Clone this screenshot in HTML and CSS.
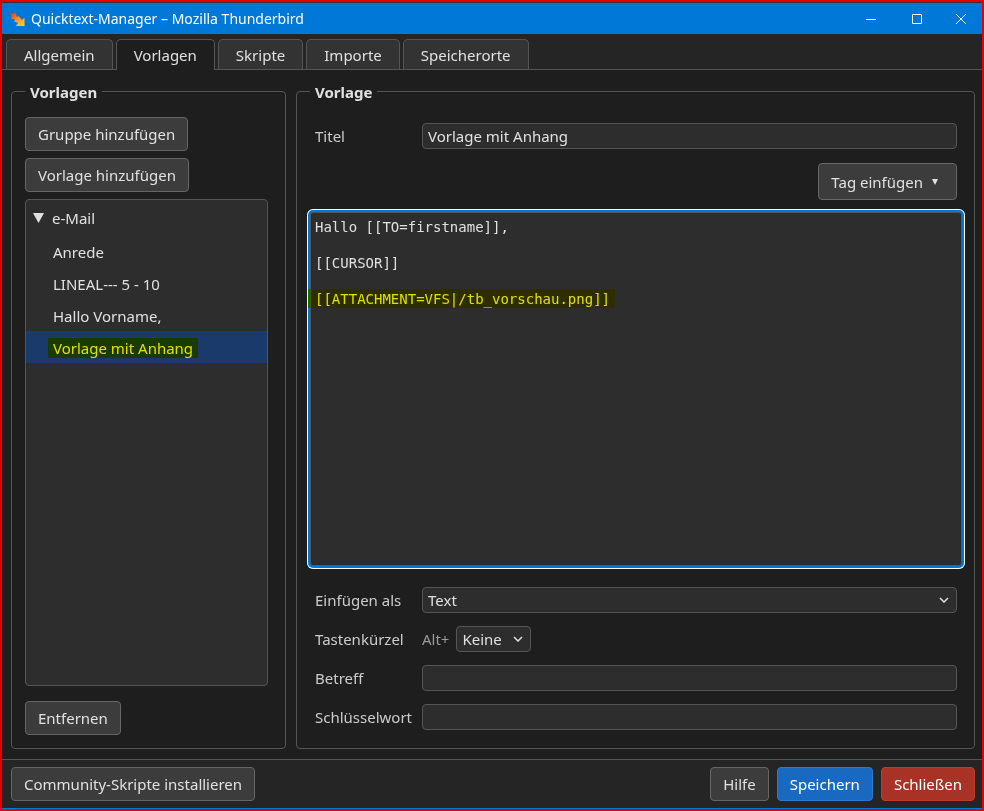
FILE: index.html
```html
<!DOCTYPE html>
<html lang="de">
<head>
  <meta charset="UTF-8">
  <title>Quicktext-Manager – Mozilla Thunderbird</title>
  <link rel="stylesheet" href="styles.css">
</head>
<body>
  <header class="titlebar">
    <svg class="app-icon" width="16" height="16" viewBox="0 0 16 16">
      <defs>
        <linearGradient id="bolt" x1="0" y1="0" x2="1" y2="1">
          <stop offset="0" stop-color="#d8231f"/>
          <stop offset=".5" stop-color="#f58a2a"/>
          <stop offset="1" stop-color="#ffd23c"/>
        </linearGradient>
      </defs>
      <path d="M0 0 L3.500 3 L6 1.500 L8 6 L9.500 5 L13 9 L15.500 6.500 V15 H6.500 L9 12 L5 10.500 L6 8.500 L2 7.500 L2.500 5 Z" fill="url(#bolt)"/>
    </svg>
    <h1 class="window-title">Quicktext-Manager – Mozilla Thunderbird</h1>
    <div class="window-controls">
      <button class="window-button" aria-label="Minimieren">
        <svg width="10" height="10" viewBox="0 0 10 10"><path d="M0 5.500H10"/></svg>
      </button>
      <button class="window-button" aria-label="Maximieren">
        <svg width="10" height="10" viewBox="0 0 10 10"><path d="M.5 .5H9.500V9.500H.5Z"/></svg>
      </button>
      <button class="window-button" aria-label="Fenster schließen">
        <svg width="10" height="10" viewBox="0 0 10 10"><path d="M0 0L10 10M10 0L0 10"/></svg>
      </button>
    </div>
  </header>

  <nav class="tabs" role="tablist">
    <button class="tab" role="tab">Allgemein</button>
    <button class="tab active" role="tab" aria-selected="true">Vorlagen</button>
    <button class="tab" role="tab">Skripte</button>
    <button class="tab" role="tab">Importe</button>
    <button class="tab" role="tab">Speicherorte</button>
  </nav>

  <main class="content">
    <fieldset class="panel template-list">
      <legend>Vorlagen</legend>
      <button class="button">Gruppe hinzufügen</button>
      <button class="button">Vorlage hinzufügen</button>
      <ul class="tree" role="tree">
        <li class="tree-group" role="treeitem" aria-expanded="true">
          <svg width="11" height="10" viewBox="0 0 11 10"><path d="M0 0H11L5.500 10Z"/></svg>
          e-Mail
        </li>
        <li class="tree-item" role="treeitem">Anrede</li>
        <li class="tree-item" role="treeitem">LINEAL--- 5 - 10</li>
        <li class="tree-item" role="treeitem">Hallo Vorname,</li>
        <li class="tree-item selected" role="treeitem" aria-selected="true"><span class="marked">Vorlage mit Anhang</span></li>
      </ul>
      <button class="button">Entfernen</button>
    </fieldset>

    <fieldset class="panel template">
      <legend>Vorlage</legend>
      <div class="form-row">
        <label for="title">Titel</label>
        <input id="title" class="field" type="text" value="Vorlage mit Anhang">
      </div>
      <div class="toolbar">
        <button class="button tag-button">Tag einfügen <svg width="6" height="6" viewBox="0 0 6 6"><path d="M0 0H6L3 6Z"/></svg></button>
      </div>
      <div class="editor">
        <textarea class="editor-text" aria-label="Vorlagentext" spellcheck="false">Hallo [[TO=firstname]],

[[CURSOR]]

[[ATTACHMENT=VFS|/tb_vorschau.png]]</textarea>
        <div class="editor-mark"></div>
      </div>
      <div class="form-rows">
        <div class="form-row">
          <label for="insert-as">Einfügen als</label>
          <select id="insert-as" class="field">
            <option>Text</option>
            <option>HTML</option>
          </select>
        </div>
        <div class="form-row">
          <label for="shortcut">Tastenkürzel</label>
          <div class="shortcut">
            <span class="modifier">Alt+</span>
            <select id="shortcut" class="field">
              <option>Keine</option>
            </select>
          </div>
        </div>
        <div class="form-row">
          <label for="subject">Betreff</label>
          <input id="subject" class="field" type="text">
        </div>
        <div class="form-row">
          <label for="keyword">Schlüsselwort</label>
          <input id="keyword" class="field" type="text">
        </div>
      </div>
    </fieldset>
  </main>

  <footer class="footer">
    <button class="button">Community-Skripte installieren</button>
    <div class="footer-actions">
      <button class="button">Hilfe</button>
      <button class="button save">Speichern</button>
      <button class="button close">Schließen</button>
    </div>
  </footer>
</body>
</html>
```
FILE: styles.css
```css
* {
  box-sizing: border-box;
}

body {
  display: flex;
  flex-direction: column;
  min-height: 100vh;
  margin: 0;
  border: 2px solid #e60000;
  background: #1e1e1e;
  color: #e0e0e0;
  font-family: "Segoe UI", "Noto Sans", sans-serif;
  font-size: 15px;
  line-height: 20px;
}

button,
input,
select {
  color: inherit;
  font-family: inherit;
  font-size: 15px;
  line-height: 20px;
}

/* Title bar */
.titlebar {
  display: flex;
  align-items: center;
  height: 32px;
  padding-left: 7px;
  border-top: 1px solid #333;
  background: #0078d7;
  color: #fff;
}

.window-title {
  flex: 1;
  margin: 0 0 0 6px;
  font-size: 14px;
  font-weight: 400;
}

.window-controls {
  display: flex;
}

.window-button {
  display: flex;
  align-items: center;
  justify-content: center;
  width: 46px;
  height: 31px;
  padding: 0;
  border: 0;
  background: none;
}

.window-button:last-child {
  width: 42px;
}

.window-button svg {
  fill: none;
  stroke: #fff;
}

/* Tabs */
.tabs {
  display: flex;
  gap: 3px;
  padding: 5px 4px 0;
  border-bottom: 1px solid #555;
  background: #252525;
}

.tab {
  height: 30px;
  padding: 0 17px;
  border: 1px solid #555;
  border-bottom: 0;
  border-radius: 5px 5px 0 0;
  background: #333;
}

.tab.active {
  height: 31px;
  margin-bottom: -1px;
  background: #1e1e1e;
}

/* Panels */
.content {
  display: grid;
  flex: 1;
  grid-template-columns: 275px 1fr;
  gap: 10px;
  padding: 11px 7px 10px 9px;
}

.panel {
  display: flex;
  flex-direction: column;
  min-width: 0;
  margin: 0;
  border: 1px solid #555;
  border-radius: 4px;
}

.panel legend {
  padding: 2px 5px 0;
  font-weight: 700;
  line-height: 18px;
}

.template-list {
  align-items: flex-start;
  gap: 7px;
  padding: 16px 17px 13px 13px;
}

.template {
  padding: 22px 12px 18px 13px;
}

.button {
  height: 34px;
  padding: 0 12px;
  border: 1px solid #666;
  border-radius: 4px;
  background: #3c3c3c;
}

/* Template tree */
.tree {
  flex: 1;
  align-self: stretch;
  margin: 0 0 8px;
  padding: 3px 0;
  border: 1px solid #555;
  border-radius: 4px;
  background: #2d2d2d;
  list-style: none;
}

.tree-group {
  display: flex;
  align-items: center;
  gap: 8px;
  height: 32px;
  padding: 0 7px 2px;
}

.tree-group svg {
  fill: #e0e0e0;
}

.tree-item {
  height: 32px;
  padding: 7px 27px 5px;
}

.tree-item.selected {
  background: #1a3a6b;
}

.marked {
  display: inline-block;
  margin-left: -5px;
  padding: 0 5px;
  background: #1a3a00;
  color: #e0e000;
}

/* Template form */
.form-row {
  display: grid;
  grid-template-columns: 107px 1fr;
  align-items: center;
  padding: 0 5px;
}

.form-row label {
  color: #ccc;
}

.form-rows {
  display: grid;
  gap: 13px;
}

.field {
  width: 100%;
  height: 26px;
  padding: 0 5px;
  border: 1px solid #555;
  border-radius: 4px;
  background: #2d2d2d;
}

select.field {
  padding-right: 28px;
  appearance: none;
  background: #2d2d2d url("data:image/svg+xml,%3Csvg xmlns='http://www.w3.org/2000/svg' width='10' height='6'%3E%3Cpath d='M1 1l4 4 4-4' fill='none' stroke='%23e0e0e0' stroke-width='1.5'/%3E%3C/svg%3E") no-repeat right 7px center;
}

.shortcut {
  display: flex;
  align-items: center;
  gap: 7px;
}

.shortcut .field {
  width: auto;
}

.modifier {
  color: #999;
}

.toolbar {
  display: flex;
  justify-content: flex-end;
  padding: 14px 5px 12px;
}

.tag-button {
  display: flex;
  align-items: center;
  gap: 9px;
  height: 37px;
  padding-right: 18px;
}

.tag-button svg {
  fill: #e0e0e0;
}

/* Editor */
.editor {
  position: relative;
  display: flex;
  flex: 1;
  margin-bottom: 21px;
}

.editor-text {
  flex: 1;
  padding: 5px 4px;
  border: 1px solid #555;
  border-radius: 3px;
  outline: 0;
  background: #2d2d2d;
  box-shadow: 0 0 0 2px #0078d7, 0 0 0 3px #fff;
  color: #e0e0e0;
  font-family: Consolas, "DejaVu Sans Mono", monospace;
  font-size: 14px;
  line-height: 18px;
  resize: none;
}

/* yellow highlighter over the attachment line */
.editor-mark {
  position: absolute;
  top: 77px;
  left: -2px;
  width: 307px;
  height: 19px;
  background: #ff0;
  mix-blend-mode: multiply;
  pointer-events: none;
}

/* Footer */
.footer {
  display: flex;
  justify-content: space-between;
  padding: 7px 7px 7px 9px;
  border-top: 1px solid #555;
  border-bottom: 1px solid #0078d7;
  background: #252525;
}

.footer-actions {
  display: flex;
  gap: 8px;
}

.save {
  border-color: #2a7ad4;
  background: #1a69c0;
  color: #fff;
}

.close {
  border-color: #c0392b;
  background: #a93226;
  color: #fff;
}
```
